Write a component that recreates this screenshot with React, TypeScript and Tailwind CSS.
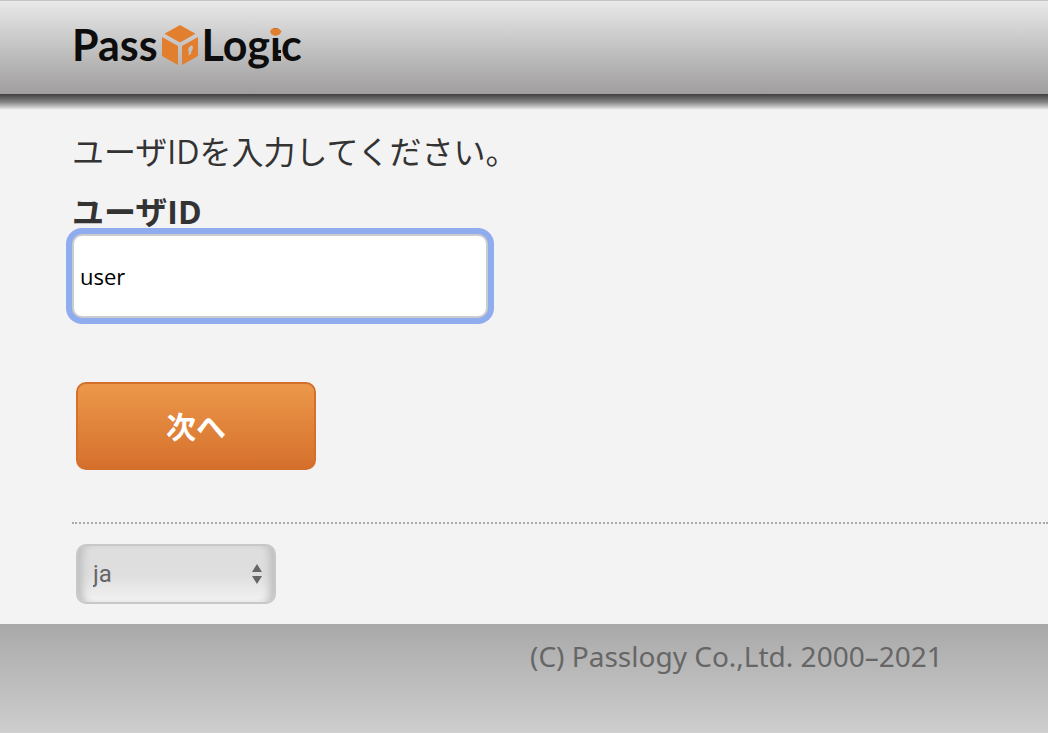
import React, { useState } from "react";

function Logo() {
  return (
    <a
      href="#"
      aria-label="PassLogic"
      className="flex items-center font-['Lato',sans-serif] text-[43px] leading-[48px] font-bold text-[#0d0d0d]"
    >
      <span>Pass</span>
      <svg viewBox="0 0 36 40" className="mx-1 h-10 w-9" fill="#e27f2e" aria-hidden="true">
        <path d="M18 0 L33.5 8.7 L18 17.5 L2.5 8.7 Z" />
        <path d="M0 12 L16 21 V40 L0 31 Z" />
        <path
          fillRule="evenodd"
          d="M36 12 L20 21 V40 L36 31 Z M30 20.5 C31.5 21.5 31 24.5 29.5 26 L29 29 L26.5 30.5 L27 27 C25 25.5 27 20.5 30 20.5 Z"
        />
      </svg>
      <span>
        Log
        <span className="relative">
          i
          {/* key head and teeth */}
          <svg viewBox="0 0 12 34" className="absolute bottom-2 left-0 h-[34px] w-3" aria-hidden="true">
            <path d="M5.5 0 L9.5 1 L11.5 3.5 L9.5 6.5 L5.5 8 L1.5 6.5 L0 3.5 L1.5 1 Z" fill="#e27f2e" />
            <path d="M7 22h4v3H7zM7 28h4v5H7z" fill="#0d0d0d" />
          </svg>
        </span>
        c
      </span>
    </a>
  );
}

export default function App() {
  const [userId, setUserId] = useState("user");
  const [lang, setLang] = useState("ja");

  return (
    <div className="flex min-h-screen flex-col bg-[#f3f3f3] font-['Open_Sans','Noto_Sans_CJK_JP',sans-serif] text-[#333]">
      <header className="border-t border-[#c4c4c4] bg-linear-to-b from-[#e9e9e9] to-[#a09e9e] px-[72px] pt-5 pb-[25px]">
        <Logo />
      </header>
      <div className="h-4 bg-linear-to-b from-[#404040] via-[#848484] to-[#f3f3f3]" />

      <main className="pl-[72px]">
        <form onSubmit={(e) => e.preventDefault()}>
          <p className="pt-5 text-[32px] leading-[44px]">ユーザIDを入力してください。</p>
          <label htmlFor="userId" className="mt-4 block text-[32px] leading-[44px] font-bold">
            ユーザID
          </label>
          <input
            id="userId"
            type="text"
            value={userId}
            onChange={(e) => setUserId(e.target.value)}
            className="block h-[84px] w-[416px] rounded-[10px] border-2 border-[#ccc] bg-white px-1.5 text-[22px] text-black ring-6 ring-[#8fadee] outline-none"
          />
          <button
            type="submit"
            className="mt-16 ml-1 block h-[88px] w-60 rounded-[10px] border-2 border-[#d5702c] bg-linear-to-b from-[#ec984a] to-[#d5702c] text-[30px] font-bold text-white"
          >
            次へ
          </button>
        </form>

        <div className="mt-[52px] border-t-2 border-dotted border-[#aaa] pt-5 pb-5">
          <div className="relative ml-1 w-[200px]">
            <select
              aria-label="Language"
              value={lang}
              onChange={(e) => setLang(e.target.value)}
              className="block h-[60px] w-full appearance-none rounded-[10px] border-2 border-[#c8c8c8] bg-linear-to-b from-[#dedede] from-50% to-[#f2f2f2] px-[15px] font-['Roboto',sans-serif] text-[24px] text-[#666] shadow-[inset_10px_0_8px_-6px_#bbb,inset_-10px_0_8px_-6px_#bbb]"
            >
              <option value="ja">ja</option>
              <option value="en">en</option>
            </select>
            <svg
              viewBox="0 0 10 20"
              className="pointer-events-none absolute top-5 right-3.5 h-5 w-2.5"
              fill="#666"
              aria-hidden="true"
            >
              <path d="M5 0 L10 8 H0 Z" />
              <path d="M5 20 L10 12 H0 Z" />
            </svg>
          </div>
        </div>
      </main>

      <footer className="flex-1 bg-linear-to-b from-[#a9a9a9] to-[#cecece] pt-4 pl-[530px] font-['Noto_Sans',sans-serif] text-[28px] leading-8 whitespace-nowrap text-[#666]">
        (C) Passlogy Co.,Ltd. 2000–2021
      </footer>
    </div>
  );
}
